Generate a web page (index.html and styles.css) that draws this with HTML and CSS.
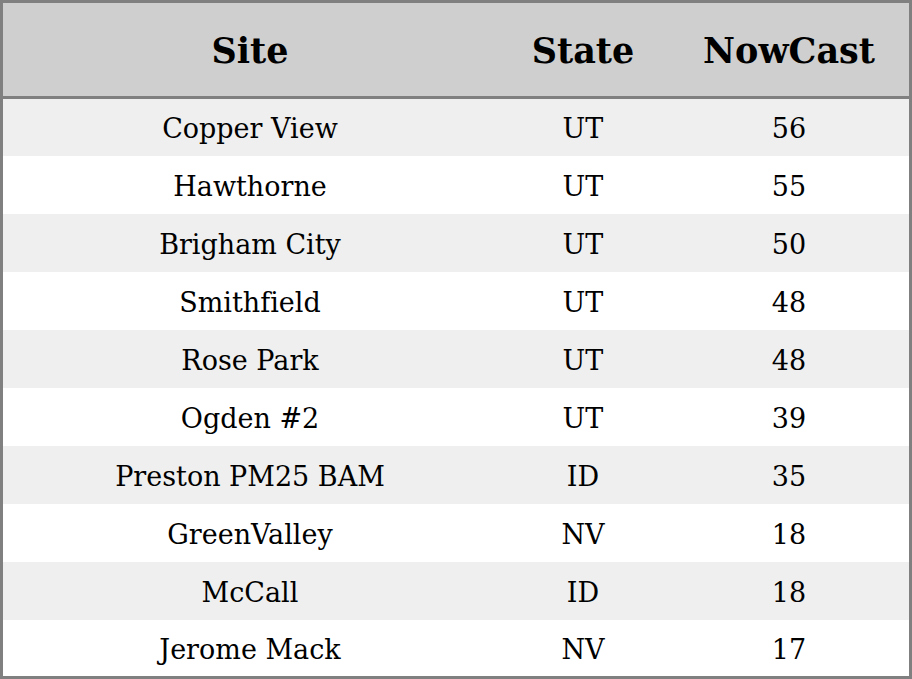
FILE: index.html
```html
<!DOCTYPE html>
<html>
<head>
<meta charset="utf-8">
<link rel="stylesheet" href="styles.css">
</head>
<body>
<table class="aq">
  <thead>
    <tr class="head"><th class="c-site">Site</th><th class="c-state">State</th><th class="c-now">NowCast</th></tr>
  </thead>
  <tbody>
    <tr><td>Copper View</td><td>UT</td><td>56</td></tr>
    <tr><td>Hawthorne</td><td>UT</td><td>55</td></tr>
    <tr><td>Brigham City</td><td>UT</td><td>50</td></tr>
    <tr><td>Smithfield</td><td>UT</td><td>48</td></tr>
    <tr><td>Rose Park</td><td>UT</td><td>48</td></tr>
    <tr><td>Ogden #2</td><td>UT</td><td>39</td></tr>
    <tr><td>Preston PM25 BAM</td><td>ID</td><td>35</td></tr>
    <tr><td>GreenValley</td><td>NV</td><td>18</td></tr>
    <tr><td>McCall</td><td>ID</td><td>18</td></tr>
    <tr><td>Jerome Mack</td><td>NV</td><td>17</td></tr>
  </tbody>
</table>
</body>
</html>
```
FILE: styles.css
```css
html, body {
  margin: 0;
  padding: 0;
  background: #fff;
}
.aq {
  width: 912px;
  height: 679px;
  border-collapse: collapse;
  border: 3px solid #808080;
  font-family: "DejaVu Serif", serif;
  font-variant-ligatures: none;
  color: #000;
  table-layout: fixed;
}
.aq th, .aq td {
  text-align: center;
  padding: 0;
}
.head {
  background: #cfcfcf;
  height: 96px;
  border-bottom: 3px solid #808080;
}
.head th {
  font-size: 35px;
  font-weight: bold;
  padding-top: 2px;
}
.c-site { width: 494px; }
.c-state { width: 172px; }
.c-now { width: 240px; }
.aq tbody tr {
  height: 58px;
}
.aq tbody td {
  font-size: 27px;
  padding-top: 3px;
}
.aq tbody tr:nth-child(odd) {
  background: #efefef;
}
```
